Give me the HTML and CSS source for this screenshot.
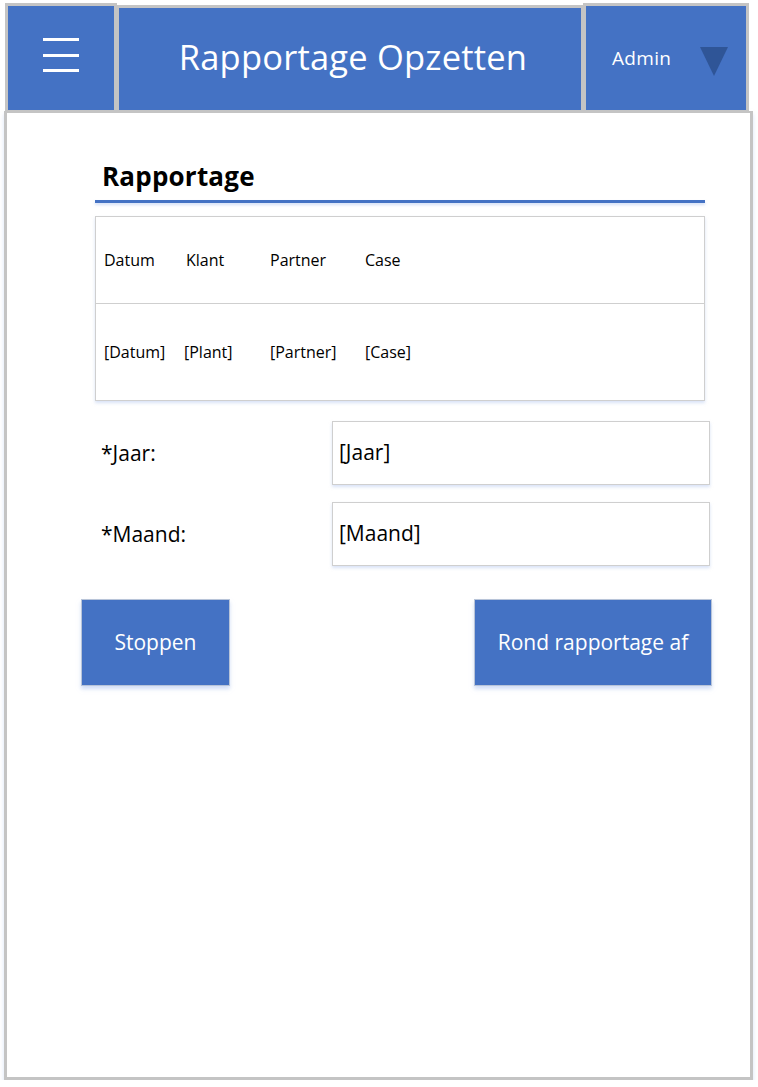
FILE: index.html
```html
<!DOCTYPE html>
<html lang="nl">
<head>
<meta charset="utf-8">
<title>Rapportage Opzetten</title>
<link rel="stylesheet" href="styles.css">
</head>
<body>
<div class="app">
  <header class="topbar">
    <div class="menu-box">
      <svg class="burger" width="36" height="36" viewBox="0 0 36 36" aria-hidden="true">
        <rect x="0" y="1" width="36" height="3" fill="#fff"/>
        <rect x="0" y="17" width="36" height="3" fill="#fff"/>
        <rect x="0" y="32" width="36" height="3" fill="#fff"/>
      </svg>
    </div>
    <div class="title-box"><h1 class="title">Rapportage Opzetten</h1></div>
    <div class="admin-box">
      <span class="admin-name">Admin</span>
      <svg class="caret" width="28" height="29" viewBox="0 0 28 29" aria-hidden="true">
        <polygon points="0,0 28,0 14,29" fill="#2f5597"/>
      </svg>
    </div>
  </header>
  <main class="frame">
    <section class="content">
      <h2 class="section-title">Rapportage</h2>
      <div class="rule"></div>
      <div class="table">
        <div class="row">
          <span class="c1">Datum</span><span class="c2">Klant</span><span class="c3">Partner</span><span class="c4">Case</span>
        </div>
        <div class="row row-data">
          <span class="c1">[Datum]</span><span class="c2">[Plant]</span><span class="c3">[Partner]</span><span class="c4">[Case]</span>
        </div>
      </div>
      <div class="field">
        <label class="field-label">*Jaar:</label>
        <div class="input">[Jaar]</div>
      </div>
      <div class="field">
        <label class="field-label">*Maand:</label>
        <div class="input">[Maand]</div>
      </div>
      <div class="actions">
        <button class="btn btn-stop">Stoppen</button>
        <button class="btn btn-done">Rond rapportage af</button>
      </div>
    </section>
  </main>
</div>
</body>
</html>
```
FILE: styles.css
```css
* { box-sizing: border-box; }
html, body { margin: 0; padding: 0; background: #fff; }
body { font-family: "Open Sans", "Noto Sans", sans-serif; color: #000; }

.app {
  width: 758px;
  padding: 3px 0 0 4px;
}

.topbar {
  display: flex;
  height: 110px;
  padding-left: 1px;
}
.menu-box, .title-box, .admin-box {
  background: #4472c4;
  border: 3px solid #c4c4c4;
  height: 110px;
}
.menu-box {
  width: 112px;
  display: flex;
  align-items: center;
  justify-content: center;
  padding-bottom: 6px;
}
.burger { display: block; margin-left: 0; }
.title-box {
  width: 468px;
  display: flex;
  align-items: center;
  justify-content: center;
  margin-top: 2px;
  height: 108px;
  margin-left: -1px;
}
.title {
  margin: 0 0 5px 6px;
  font-weight: 400;
  font-size: 34.5px;
  color: #fff;
  letter-spacing: 0.2px;
}
.admin-box {
  width: 166px;
  display: flex;
  align-items: center;
  padding: 0 0 0 26px;
  margin-left: -1px;
}
.admin-name {
  color: #fff;
  font-size: 19px;
  letter-spacing: 0.3px;
  width: 88px;
}
.caret { display: block; margin-top: 6px; }

.frame {
  width: 749px;
  height: 969px;
  margin-top: -2px;
  border: 3px solid #c4c4c4;
  border-top: 2px solid #c4c4c4;
  box-shadow: 0 3px 4px rgba(180, 200, 240, 0.5);
  background: #fff;
}
.content {
  padding: 45px 0 0 88px;
  width: 730px;
}
.section-title {
  margin: 0 0 0 7px;
  font-size: 26px;
  font-weight: 700;
  line-height: 36px;
  letter-spacing: 0.2px;
}
.rule {
  height: 3px;
  background: #4472c4;
  width: 610px;
  margin-top: 6px;
  box-shadow: 0 2px 3px rgba(180, 200, 240, 0.6);
}
.table {
  width: 610px;
  margin-top: 13px;
  border: 1px solid #cfcfcf;
  box-shadow: 0 2px 3px rgba(180, 200, 240, 0.5);
  font-size: 16px;
}
.row {
  height: 86px;
  display: flex;
  align-items: center;
  padding-left: 8px;
  padding-top: 0;
}
.row-data {
  height: 97px;
  border-top: 1px solid #cfcfcf;
}
.c1 { width: 82px; }
.c2 { width: 84px; }
.c3 { width: 95px; }
.c4 { width: 80px; }
.row-data .c2 { margin-left: -2px; margin-right: 2px; }

.field {
  display: flex;
  align-items: center;
  margin-top: 20px;
}
.field + .field { margin-top: 17px; }
.field-label {
  width: 237px;
  padding-left: 6px;
  font-size: 21px;
}
.input {
  width: 378px;
  height: 64px;
  border: 1px solid #cfcfcf;
  box-shadow: 0 2px 3px rgba(180, 200, 240, 0.5);
  display: flex;
  align-items: center;
  padding: 0 0 2px 6px;
  font-size: 21px;
}

.actions {
  display: flex;
  justify-content: space-between;
  width: 631px;
  margin-left: -14px;
  margin-top: 33px;
}
.btn {
  background: #4472c4;
  border: 1px solid #b8c4d8;
  color: #fff;
  font-family: "Open Sans", "Noto Sans", sans-serif;
  font-size: 21px;
  height: 87px;
  box-shadow: 0 3px 4px rgba(180, 200, 240, 0.6);
  padding: 0 0 2px 0;
}
.btn-stop { width: 149px; }
.btn-done { width: 238px; }
```
